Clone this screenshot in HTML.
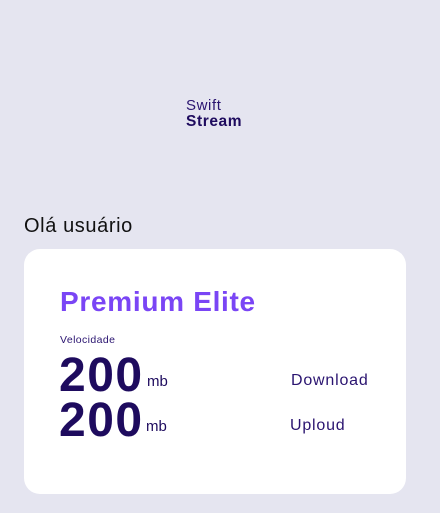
<!DOCTYPE html>
<html><head><meta charset="utf-8"><style>
body{margin:0;width:440px;height:513px;background:#e5e5f0;font-family:"Liberation Sans",sans-serif;position:relative;overflow:hidden}
.a{position:absolute;white-space:nowrap;line-height:1}
.card{position:absolute;left:24px;top:249px;width:382px;height:245px;background:#fff;border-radius:16px}
</style></head><body>
<div class="a" style="left:186px;top:98px;font-size:15px;color:#2a1470;letter-spacing:0.6px">Swift</div>
<div class="a" style="left:186px;top:114px;font-size:15.5px;font-weight:bold;color:#1e0b5e;letter-spacing:0.6px">Stream</div>
<div class="a" style="left:24px;top:216px;font-size:20px;color:#111;letter-spacing:0.6px">Olá usuário</div>
<div class="card"></div>
<div class="a" style="left:60px;top:288px;font-size:28px;font-weight:bold;color:#7a45f5;letter-spacing:0.7px">Premium Elite</div>
<div class="a" style="left:60px;top:335px;font-size:10.5px;color:#2a1470;letter-spacing:0.4px">Velocidade</div>
<div class="a" style="left:59px;top:352px;font-size:48px;font-weight:bold;color:#1e0b5e;letter-spacing:1.5px">200</div>
<div class="a" style="left:147px;top:374px;font-size:15px;color:#1e0b5e">mb</div>
<div class="a" style="left:59px;top:397px;font-size:48px;font-weight:bold;color:#1e0b5e;letter-spacing:1.5px">200</div>
<div class="a" style="left:146px;top:419px;font-size:15px;color:#1e0b5e">mb</div>
<div class="a" style="left:291px;top:373px;font-size:16px;color:#2a1470;letter-spacing:0.8px">Download</div>
<div class="a" style="left:290px;top:418px;font-size:16px;color:#2a1470;letter-spacing:0.8px">Uploud</div>
</body></html>
